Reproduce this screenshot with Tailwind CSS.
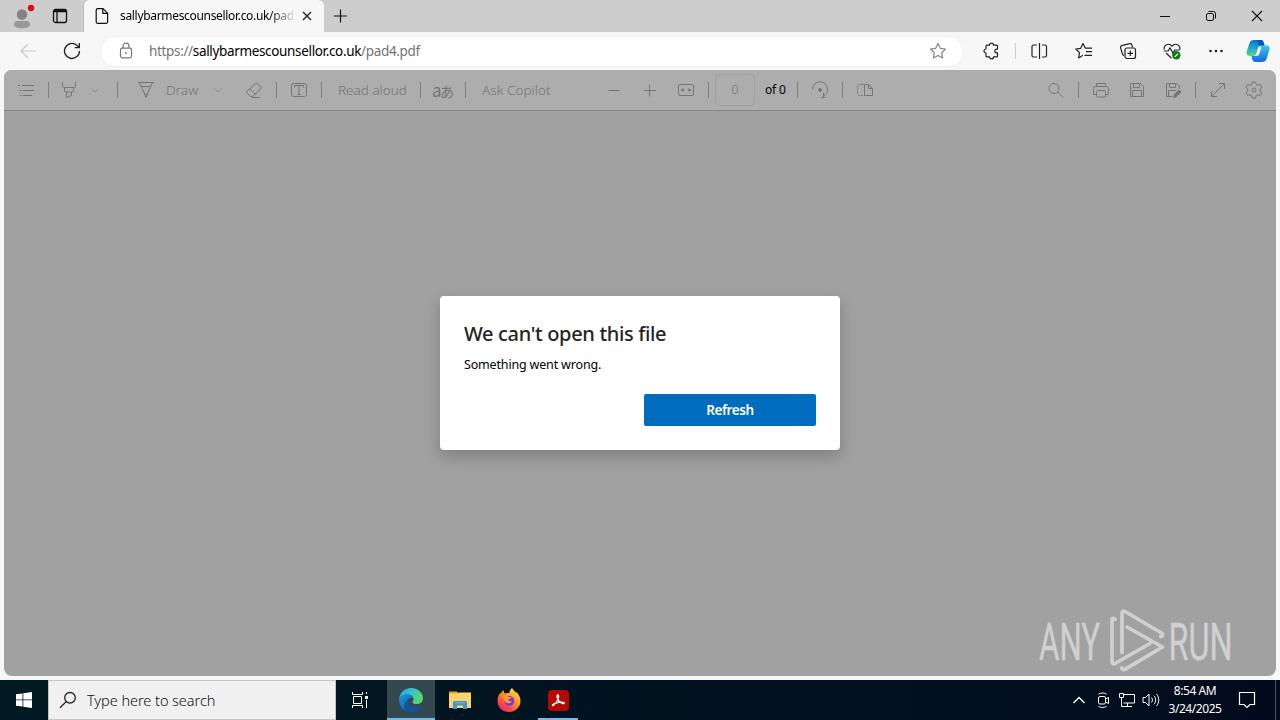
<!DOCTYPE html>
<html lang="en">
<head>
  <meta charset="UTF-8" />
  <meta name="viewport" content="width=device-width, initial-scale=1" />
  <title>sallybarmescounsellor.co.uk/pad4.pdf</title>
  <script src="https://cdn.jsdelivr.net/npm/@tailwindcss/browser@4"></script>
</head>
<body class="w-[1280px] h-[720px] overflow-hidden flex flex-col bg-[#f7f7f7] font-['Noto_Sans','Open_Sans',sans-serif] text-black">

  <!-- Tab strip -->
  <header class="h-8 shrink-0 flex items-stretch bg-[#cdcdcd]">
    <div class="w-[83px] flex items-center rounded-br-md">
      <svg class="w-6 h-7 ml-3" viewBox="0 0 24 28" fill="none">
        <circle cx="10" cy="12.500" r="5.2" fill="#858280" />
        <path d="M2 22.500c0-2.500 1.500-3.600 3.600-3.600h8.800c2.100 0 3.600 1.100 3.600 3.600 0 2.600-3.500 3.800-8 3.800s-8-1.200-8-3.800z" fill="#999" />
        <circle cx="19" cy="6" r="3.2" fill="#e00b1c" />
      </svg>
      <svg class="w-4 h-4 ml-4" viewBox="0 0 16 16" fill="none" stroke="#111" stroke-width="1.300">
        <rect x="1.500" y="1.500" width="13" height="13" rx="2" />
        <path d="M2 3h12" stroke-width="2.500" /><path d="M5 4v10.500" />
      </svg>
    </div>
    <div class="w-[241px] flex items-center bg-[#f7f7f7] rounded-t-md border-l border-[#bbb]">
      <svg class="w-4 h-4 ml-2.5" viewBox="0 0 16 16" fill="none" stroke="#111" stroke-width="1.200">
        <path d="M3.600.6h5.400l4.600 4.600v8.700a1.400 1.400 0 0 1-1.400 1.400H3.600a1.400 1.400 0 0 1-1.400-1.400V2A1.400 1.400 0 0 1 3.600.6zM8.800.8v4.600h4.600" />
      </svg>
      <span class="ml-[10px] w-[174px] overflow-hidden whitespace-nowrap text-[12px] tracking-[-0.32px] bg-linear-to-r from-black from-86% to-black/10 bg-clip-text text-transparent">sallybarmescounsellor.co.uk/pad</span>
      <svg class="w-2.5 h-2.5 ml-2" viewBox="0 0 10 10" stroke="#222" stroke-width="1.400"><path d="M1 1l8 8M9 1l-8 8" /></svg>
    </div>
    <svg class="w-4 h-4 ml-2 self-center" viewBox="0 0 16 16" stroke="#111" stroke-width="1.200"><path d="M8.500 1.500v13M2 8h13" /></svg>
    <div class="ml-auto flex items-center gap-[34px] pr-[17px]">
      <svg class="w-3 h-3" viewBox="0 0 12 12" stroke="#111"><path d="M1 6.500h10" /></svg>
      <svg class="w-3 h-3" viewBox="0 0 12 12" fill="none" stroke="#111"><rect x="1.500" y="3.500" width="7" height="7" rx="1.500" /><path d="M3.500 1.500h5a2 2 0 0 1 2 2v5" /></svg>
      <svg class="w-3 h-3" viewBox="0 0 12 12" stroke="#111" stroke-width="1.100"><path d="M1 1l10 10M11 1L1 11" /></svg>
    </div>
  </header>

  <!-- Address bar -->
  <div class="h-[38px] shrink-0 flex items-center">
    <svg class="w-4 h-4 ml-5" viewBox="0 0 16 16" fill="none" stroke="#c9c9c9" stroke-width="1.200"><path d="M16 8H1M8 1L1 8l7 7" /></svg>
    <svg class="w-[18px] h-[18px] ml-[27px]" viewBox="0 0 18 18" fill="none" stroke="#222" stroke-width="1.300"><path d="M16.500 9a7.500 7.500 0 1 1-2.700-5.800L16.300 5.400M16.300 1v4.600h-4.600" /></svg>
    <div class="ml-[19px] w-[864px] h-[31px] rounded-full bg-white border border-[#f1f1f1] flex items-center">
      <svg class="w-4 h-[18px] ml-[17px]" viewBox="0 0 16 18" fill="none" stroke="#777" stroke-width="1.200">
        <rect x="2.500" y="6.200" width="11" height="9.600" rx="1.800" /><path d="M5 6V4.200a3 3 0 0 1 6 0V6" /><circle cx="8" cy="11" r=".9" fill="#777" stroke="none" />
      </svg>
      <span class="ml-[15px] w-[300px] whitespace-nowrap text-[13.500px] tracking-[-0.34px] text-[#737373]">https://<span class="text-black">sallybarmescounsellor.co.uk</span>/pad4.pdf</span>
      <svg class="w-[18px] h-[18px] ml-auto mr-4" viewBox="0 0 18 18" fill="none" stroke="#858585" stroke-width="1.200" stroke-linejoin="round"><path d="M9 1.500l2.300 4.800 5.200.7-3.800 3.700.9 5.300L9 13.500 4.400 16l.9-5.300L1.500 7l5.200-.7z" /></svg>
    </div>
    <svg class="w-[18px] h-[18px] ml-[18px]" viewBox="0 0 18 18" fill="none" stroke="#222" stroke-width="1.200" stroke-linejoin="round"><path d="M5 3.200h2.500a2 2 0 0 1 4 0h3a1 1 0 0 1 1 1v2.900h-.8a1.900 1.900 0 0 0 0 3.800h.8v3a1 1 0 0 1-1 1h-3a2 2 0 0 1-4 0H5a1 1 0 0 1-1-1v-2.900a2 2 0 0 1 0-4V4.200a1 1 0 0 1 1-1z" /></svg>
    <div class="ml-[15px] w-px h-4 bg-[#ccc]"></div>
    <svg class="w-[18px] h-[18px] ml-[14px]" viewBox="0 0 18 18" fill="none" stroke="#222" stroke-width="1.200"><path d="M7 3H3.500a1.500 1.500 0 0 0-1.500 1.500v9A1.500 1.500 0 0 0 3.500 15H7M9.500 1v16M12 3h3a1.500 1.500 0 0 1 1.500 1.500v9A1.500 1.500 0 0 1 15 15h-3" /></svg>
    <svg class="w-[18px] h-[18px] ml-[27px]" viewBox="0 0 18 18" fill="none" stroke="#222" stroke-width="1.200" stroke-linejoin="round"><path d="M10.300 6.200L8 1.500 5.700 6.300.8 7l3.700 3.700-.9 5.200L8 13.300M10.300 6.200h6.700M11 9.700h6M9.500 13.300H17" /></svg>
    <svg class="w-[18px] h-[18px] ml-[26px]" viewBox="0 0 18 18" fill="none" stroke="#222" stroke-width="1.200"><rect x="6" y="6" width="10.500" height="10.500" rx="2" /><path d="M11.300 8.500v5.500M8.500 11.300H14M13.500 5.500l-.7-2.700a1.600 1.600 0 0 0-2-1.200l-8 2.100a1.600 1.600 0 0 0-1.200 2l1.900 6.500c.2.800.8 1.200 1.600 1.200" /></svg>
    <svg class="w-[18px] h-[18px] ml-[26px]" viewBox="0 0 18 18" fill="none" stroke="#222" stroke-width="1.200" stroke-linejoin="round"><path d="M1.300 7.500C.2 3.500 5.300.2 9 4c3.700-3.800 8.800-.5 7.700 3.500M3 11l5.500 5.200M.8 9h4.400L7 5.700l3 5.600L11.800 8h5" /><circle cx="13.300" cy="13.300" r="4.200" fill="#107c10" stroke="none" /><path d="M11.800 14.800l3-3" stroke="#fff" /></svg>
    <svg class="w-[18px] h-[18px] ml-[26px]" viewBox="0 0 18 18" fill="#222"><circle cx="3.500" cy="9" r="1.300" /><circle cx="9" cy="9" r="1.300" /><circle cx="14.500" cy="9" r="1.300" /></svg>
    <svg class="w-6 h-6 ml-[21px]" viewBox="0 0 24 24">
      <defs>
        <linearGradient id="cpA" x1="0" y1="0" x2="0" y2="1"><stop offset="0" stop-color="#0d6fd0" /><stop offset=".5" stop-color="#19a9c9" /><stop offset="1" stop-color="#63d68b" /></linearGradient>
        <linearGradient id="cpB" x1="0" y1="0" x2="0" y2="1"><stop offset="0" stop-color="#36c7f2" /><stop offset="1" stop-color="#1769e0" /></linearGradient>
      </defs>
      <path d="M8 1h6.500c2 0 2.800 1 3.400 3l.6 2.500h-3.200c-2 0-2.800 1-3.400 3l-1.500 4.800c-.6 1.800-1.500 2.700-3.300 2.700H3.200C.8 17 0 15 .7 12.600L3.500 4C4.200 2 5.500 1 8 1z" fill="url(#cpA)" />
      <path d="M16 23H9.500c-2 0-2.800-1-3.400-3L5.500 17h3.200c2 0 2.800-1 3.400-3l1.500-4.300C14.200 7.500 15.100 6.500 17 6.500h3.800c2.400 0 3.200 2 2.500 4.400L20.500 20c-.7 2-2 3-4.500 3z" fill="url(#cpB)" />
      <path d="M9 1h5.500c2 0 2.800 1 3.400 3l.6 2.500h-3.200c-1 0-1.600.3-2.200 1C12.500 4 12 1 9 1z" fill="#0a57ad" />
      <path d="M12.600 8.500h2.800l-2.700 8h-2.900z" fill="#fff" />
    </svg>
  </div>

  <!-- PDF viewer -->
  <main class="relative mx-1 h-[606px] shrink-0 flex flex-col rounded-lg overflow-hidden bg-[#a1a1a1]">
    <div class="h-[41px] shrink-0 flex items-center bg-[#adadad] border-b border-[#868686] text-[#757575] text-[13.500px]">
      <svg class="w-[18px] h-[18px] ml-[13px]" viewBox="0 0 18 18" fill="none" stroke="currentColor"><path d="M5 4.500h12M6 9.500h11M6 14.500h9M1 4.500h2M2.500 9.500h2M2.500 14.500h2" /></svg>
      <div class="ml-[13px] w-px h-4 bg-[#808080]"></div>
      <svg class="w-[18px] h-[18px] ml-[11px]" viewBox="0 0 18 18" fill="none" stroke="currentColor"><path d="M2.500 1v4.500a1 1 0 0 0 1 1h11a1 1 0 0 0 1-1V1M4.500 6.500v3a1.500 1.500 0 0 0 1.500 1.500h6a1.500 1.500 0 0 0 1.500-1.500v-3M6.500 11v5.500l5-2V11" /></svg>
      <svg class="w-2 h-2 ml-[13px]" viewBox="0 0 8 8" fill="none" stroke="#8c8c8c"><path d="M.5 2.500L4 6l3.500-3.500" /></svg>
      <div class="ml-[18px] w-px h-4 bg-[#808080]"></div>
      <svg class="w-[18px] h-[18px] ml-[19px]" viewBox="0 0 18 18" fill="none" stroke="currentColor" stroke-linejoin="round"><path d="M1 1.500h16M2.500 1.500l2 4.500L9 16.500 13.500 6l2-4.500M4.500 5.500h9M7.500 13h3" /></svg>
      <span class="ml-[11px] w-[34px] whitespace-nowrap font-light tracking-[0.1px]">Draw</span>
      <svg class="w-2 h-2 ml-[14px]" viewBox="0 0 8 8" fill="none" stroke="#8c8c8c"><path d="M.5 2.500L4 6l3.500-3.500" /></svg>
      <svg class="w-[18px] h-[18px] ml-[23px]" viewBox="0 0 18 18" fill="none" stroke="currentColor" stroke-linejoin="round"><path d="M11.500 1.800l5 5-8.700 8.700H5.500L1.900 12a1.200 1.200 0 0 1 0-1.700zM5 7.800l6 6M7 16.500h8" /></svg>
      <div class="ml-[13px] w-px h-4 bg-[#808080]"></div>
      <svg class="w-[18px] h-[18px] ml-[13px]" viewBox="0 0 18 18" fill="none" stroke="currentColor"><rect x="1.500" y="2.500" width="15" height="13" rx="2" /><path d="M4.500 6.500v-2h9v2M9 4.500v9M7.500 13.500h3" /></svg>
      <div class="ml-[13px] w-px h-4 bg-[#808080]"></div>
      <span class="ml-4 w-[70px] whitespace-nowrap font-light">Read aloud</span>
      <div class="ml-3 w-px h-4 bg-[#808080]"></div>
      <span class="ml-[11px] w-5 whitespace-nowrap text-[14px] tracking-[-1.500px] font-['Noto_Sans_CJK_JP',sans-serif] leading-none mb-0.5"><span class="text-[17px]">a</span>あ</span>
      <div class="ml-[13px] w-px h-4 bg-[#808080]"></div>
      <span class="ml-4 w-[72px] whitespace-nowrap font-light tracking-[0.05px]">Ask Copilot</span>
      <svg class="w-[18px] h-[18px] ml-[51px]" viewBox="0 0 18 18" stroke="currentColor"><path d="M3.500 9.500h11" /></svg>
      <svg class="w-[18px] h-[18px] ml-[18px]" viewBox="0 0 18 18" stroke="currentColor"><path d="M3 9.500h12M8.500 3.500v12" /></svg>
      <svg class="w-[18px] h-[18px] ml-[18px]" viewBox="0 0 18 18" fill="none" stroke="currentColor"><rect x="1.500" y="3.500" width="15" height="11" rx="1.500" /><path d="M4 9h3.500M10.500 9H14" /><path d="M6.500 7v4L4 9zM11.500 7v4L14 9z" fill="currentColor" stroke="none" /></svg>
      <div class="ml-[13px] w-px h-4 bg-[#808080]"></div>
      <div class="ml-1.5 w-10 h-8 rounded-sm border border-[#a0a0a0] flex items-center justify-center text-[12px] font-light">0</div>
      <span class="ml-2.5 w-[22px] whitespace-nowrap text-[12px] tracking-[-0.2px] text-black">of 0</span>
      <div class="ml-2.5 w-px h-4 bg-[#808080]"></div>
      <svg class="w-[18px] h-[18px] ml-[13px]" viewBox="0 0 18 18" fill="none" stroke="currentColor"><path d="M1.500 8.500a7.500 7.500 0 1 1 11.500 6.200M10 16.500h4.500M12.500 12v4.500" /><circle cx="9" cy="9" r="1.500" fill="currentColor" /></svg>
      <div class="ml-[13px] w-px h-4 bg-[#808080]"></div>
      <svg class="w-[18px] h-[18px] ml-[13px]" viewBox="0 0 18 18" fill="none" stroke="currentColor"><path d="M7.500 3.500h-4a2 2 0 0 0-2 2v7a2 2 0 0 0 2 2h4" stroke-dasharray="2 1" /><path d="M8.500 3.500h4l4 4v7h-8zM12.500 3.500v4h4" /></svg>

      <svg class="w-[18px] h-[18px] ml-auto" viewBox="0 0 18 18" fill="none" stroke="currentColor"><circle cx="7" cy="7.500" r="5" /><path d="M10.700 11l5.500 5.500" /></svg>
      <div class="ml-[13px] w-px h-4 bg-[#808080]"></div>
      <svg class="w-[18px] h-[18px] ml-[13px]" viewBox="0 0 18 18" fill="none" stroke="currentColor"><path d="M4.500 5.500v-3h9v3M4.500 13.500h-3v-6a2 2 0 0 1 2-2h11a2 2 0 0 1 2 2v6h-3" /><rect x="4.500" y="9.500" width="9" height="6.500" rx="1" /></svg>
      <svg class="w-[18px] h-[18px] ml-[18px]" viewBox="0 0 18 18" fill="none" stroke="currentColor"><path d="M2.500 2.500h10l3 3v10h-13zM5.500 2.500v4h6v-4M4.500 15.500v-6h9v6" /></svg>
      <svg class="w-[18px] h-[18px] ml-[18px]" viewBox="0 0 18 18" fill="none" stroke="currentColor"><path d="M8 15.500H2.500v-13h10l3 3V8M5.500 2.500v4h6v-4M4.500 15.500v-6h8" /><path d="M9.500 16.500l.8-2.800 4.700-4.700 2 2-4.700 4.700z" fill="currentColor" /></svg>
      <div class="ml-[13px] w-px h-4 bg-[#808080]"></div>
      <svg class="w-[18px] h-[18px] ml-[13px]" viewBox="0 0 18 18" fill="none" stroke="currentColor"><path d="M2.500 15.500l13-13M10 2.500h5.500V8M2.500 10v5.500H8" /></svg>
      <svg class="w-[18px] h-[18px] ml-[18px] mr-[13px]" viewBox="0 0 18 18" fill="none" stroke="currentColor" stroke-linejoin="round"><path d="M7.300 1h3.400l.5 2.300 1.700 1 2.400-.8 1.700 2.900L15.200 8v2l1.800 1.600-1.700 2.900-2.400-.8-1.700 1-.5 2.300H7.300l-.5-2.300-1.700-1-2.400.8L1 11.600 2.800 10V8L1 6.400l1.700-2.900 2.400.8 1.700-1z" /><circle cx="9" cy="9" r="2" /></svg>
    </div>

    <div class="flex-1 flex justify-center items-start">
      <section class="mt-[185px] w-[400px] h-[154px] rounded bg-white shadow-[0_6px_16px_rgba(0,0,0,0.22)] px-6 pt-6 flex flex-col">
        <h1 class="h-7 leading-7 text-[20px] font-medium tracking-[-0.34px] text-[#242424] whitespace-nowrap">We can't open this file</h1>
        <p class="mt-[7px] h-5 leading-5 text-[12.500px] tracking-[-0.170px] whitespace-nowrap">Something went wrong.</p>
        <button class="mt-[19px] self-end w-[172px] h-8 rounded-xs bg-[#006cbe] text-white text-[13.500px] font-semibold tracking-[-0.4px]">Refresh</button>
      </section>
    </div>

    <!-- Watermark over the page area -->
    <svg class="absolute left-[1028px] top-[536px] w-[220px] h-[70px]" viewBox="0 0 220 70" fill="none">
      <g fill="#d0d0d0" stroke="#d0d0d0" stroke-width=".4" font-family="Roboto, sans-serif" font-size="52" font-weight="400">
        <text x="7" y="53.500" textLength="61" lengthAdjust="spacingAndGlyphs">ANY</text>
        <text x="136.500" y="53.500" textLength="64" lengthAdjust="spacingAndGlyphs">RUN</text>
      </g>
      <g stroke="#d0d0d0" stroke-width="3.700" stroke-linejoin="round" stroke-linecap="round">
        <path d="M83 13.500c-1-1.700-3-1.500-3 .5v41.500c0 2 1.500 3 3 2l35-20" />
        <path d="M90 46.500V7.500c0-2 1.500-3 3-2l36.500 21.500c2 1.500 1.200 4-.8 3.500" />
        <path d="M95 21l35.500 20L93 63.300c-1.500 1-3 .2-3.200-1.500" />
        <path d="M95 21l34 10" stroke="none" />
      </g>
    </svg>
  </main>

  <!-- Taskbar -->
  <footer class="mt-1 h-10 shrink-0 flex items-stretch bg-linear-to-r from-[#001a22] to-[#020b1d] text-white">
    <div class="w-12 flex items-center justify-center">
      <svg class="w-4 h-4" viewBox="0 0 16 16" fill="#fff"><path d="M0 2.300l6.500-.9v6.100H0zM7.300 1.300L16 0v7.500H7.300zM0 8.300h6.500v6.300L0 13.700zM7.300 8.300H16V16l-8.700-1.200z" /></svg>
    </div>
    <div class="w-72 flex items-center bg-[#f0f0f0] border border-[#c4c4c4]">
      <svg class="w-[18px] h-[18px] ml-2.5" viewBox="0 0 18 18" fill="none" stroke="#222" stroke-width="1.300"><circle cx="11" cy="6.800" r="5.300" /><path d="M7.200 10.600L1 16.800" /></svg>
      <span class="ml-2.5 mt-0.5 text-[14.500px] font-light tracking-[-0.05px] text-[#111] whitespace-nowrap">Type here to search</span>
    </div>
    <div class="w-[51px] flex items-center justify-center pr-1">
      <svg class="w-4 h-4" viewBox="0 0 16 16" fill="none" stroke="#fff"><path d="M.5 0v2.500h10V0M.5 16v-2.500h10V16M1.500 4.500h8v7h-8zM14.500 0v2M14.500 8v8" /><path d="M13 4h3v3h-3z" fill="#fff" stroke="none" /></svg>
    </div>
    <div class="w-12 flex items-center justify-center bg-[#34484f] border-b-2 border-[#76b9ed] pt-0.5">
      <svg class="w-6 h-6" viewBox="0 0 24 24">
        <defs>
          <linearGradient id="edgeTop" x1="0" y1="0" x2="1" y2=".3"><stop offset="0" stop-color="#2aa6e0" /><stop offset=".5" stop-color="#31c3cf" /><stop offset="1" stop-color="#58d66a" /></linearGradient>
          <linearGradient id="edgeLow" x1="0" y1="0" x2="1" y2="1"><stop offset="0" stop-color="#1b93dc" /><stop offset="1" stop-color="#0c4d9c" /></linearGradient>
        </defs>
        <path d="M0 11.500C.5 5 5.500 0 12 0c7 0 12 5 12 10 0 4-3 6-6.200 6-2.800 0-4.500-1-4.500-1.800s1.200-1.200 1.200-3c0-2.500-2.500-4.700-6-4.700C4 6.500.8 9 0 11.500z" fill="url(#edgeTop)" />
        <path d="M0 12c0-3.500 4-5.500 8.300-5.500 3.700 0 6.200 2.200 6.200 4.700-1-1.500-2.800-1.700-4-1-2.500 1.500-2.500 6 1 8.300 3 2 7.500 1.700 10-.3 1-.7 1.300.2.800.9C20 22.300 16.500 24 12.500 24 5.500 24 0 19 0 12z" fill="url(#edgeLow)" />
        <path d="M8.500 24C3 22 5.500 12 10.500 10.200c-2.500 1.800-2.500 6 1 8.300 3 2 7.500 1.700 10-.3 1-.7 1.300.2.800.9C19 23.500 13 25 8.500 24z" fill="#11559f" />
      </svg>
    </div>
    <div class="w-[49px] flex items-center justify-center">
      <svg class="w-[22px] h-5" viewBox="0 0 22 20"><path d="M0 1.500h8l2 2.500h12v5H0z" fill="#e8a22a" /><path d="M0 3.500h8.500L10 2.500h12V18H0z" fill="#fbd56b" /><path d="M4 19v-6.500a1.500 1.500 0 0 1 1.500-1.500h11a1.500 1.500 0 0 1 1.500 1.500V19h-4v-3.500H8V19z" fill="#3f91cf" /><path d="M6 12.800h10" stroke="#7dbde8" /></svg>
    </div>
    <div class="w-[49px] flex items-center justify-center">
      <svg class="w-6 h-6" viewBox="0 0 24 24">
        <defs><linearGradient id="fox" x1=".9" y1="0" x2=".2" y2="1"><stop offset="0" stop-color="#fff14a" /><stop offset=".45" stop-color="#ff9422" /><stop offset=".8" stop-color="#ff3f4c" /><stop offset="1" stop-color="#e5218a" /></linearGradient></defs>
        <path d="M15 0c1.500 1.500 2 3 4 5 0-.5-.3-1-.5-1.500 3.500 2.500 5 6.500 5 9.500C23.500 19 18.500 24 12 24S.5 19.500.5 13c0-3.500 1-6 2.800-8.500 0 .8.200 1.200.5 1.500.5-1.700 1.500-3 2.700-4 0 1.500.5 3 2 3.500 1.500-.5 3-.5 4-.3C12.300 3.500 13.300 1.500 15 0z" fill="url(#fox)" />
        <circle cx="12.300" cy="13" r="5" fill="#7b3bd8" />
        <path d="M5.500 8.500c2-1.500 4.500-1 6 .5h3c-.3 1.500-3 1.500-3 2.500-.2 1.500 1.800 2.300 3.500 1.500-1 2.500-4.500 3-6.500 1S7 9.500 5.500 8.500z" fill="#ff9a2a" />
      </svg>
    </div>
    <div class="w-[50px] flex items-center justify-center relative">
      <svg class="w-[21px] h-[21px]" viewBox="0 0 21 21"><rect width="21" height="21" rx="4" fill="#b30b00" /><path d="M9.800 5c2.200 0-.2 7.500-4.500 10.500-1.800.8-1-1.500 3-2.500 3.500-1.200 8-1.200 8 .2 0 1.500-6.300-.7-7.300-6C8.800 5.800 9.300 5 9.800 5z" fill="none" stroke="#fff" stroke-width="1.300" /></svg>
      <div class="absolute bottom-0 left-[5px] w-10 h-0.5 bg-[#76b9ed]"></div>
    </div>

    <div class="ml-auto flex items-center">
      <svg class="w-3 h-3" viewBox="0 0 12 12" fill="none" stroke="#fff" stroke-width="1.300"><path d="M.5 9L6 3.500 11.500 9" /></svg>
      <svg class="w-4 h-[18px] ml-2.5" viewBox="0 0 16 18" fill="none" stroke="#fff"><rect x="3.500" y="5.500" width="7" height="7.500" rx="1.500" /><path d="M10.500 8l3-1.500v6l-3-1.500M3.500 3.200c2-1.600 6-1.600 8 0M3.500 15.300c2 1.600 6 1.600 8 0" /></svg>
      <svg class="w-[18px] h-4 ml-[7px]" viewBox="0 0 18 16" fill="none" stroke="#fff"><path d="M5.500 2.500h11v8.500H5.500M9.500 11v3M6 14.500h8M3.500 6v8.500h3M1.500 1.500h4v4h-4z" /></svg>
      <svg class="w-[18px] h-4 ml-1.5" viewBox="0 0 18 16" fill="none" stroke="#fff"><path d="M1 5.500h2.500L7 2v12l-3.500-3.500H1zM9.500 5.500c1.200 1.500 1.200 3.500 0 5M12 3.700c2.200 2.500 2.200 6 0 8.600M14.500 2c3 3.500 3 8.500 0 12" /></svg>
      <div class="ml-[5px] w-[60px] text-[12px] leading-[18px] tracking-[-0.450px] text-center whitespace-nowrap">8:54 AM<br />3/24/2025</div>
      <svg class="w-[18px] h-[18px] ml-[13px]" viewBox="0 0 18 18" fill="none" stroke="#fff" stroke-width="1.200"><path d="M1.500 1.500h15v12H12l-3 3-3-3H1.500z" /></svg>
      <div class="ml-[19px] mr-1 w-px h-10 bg-[#4a5361]"></div>
    </div>
  </footer>
</body>
</html>
